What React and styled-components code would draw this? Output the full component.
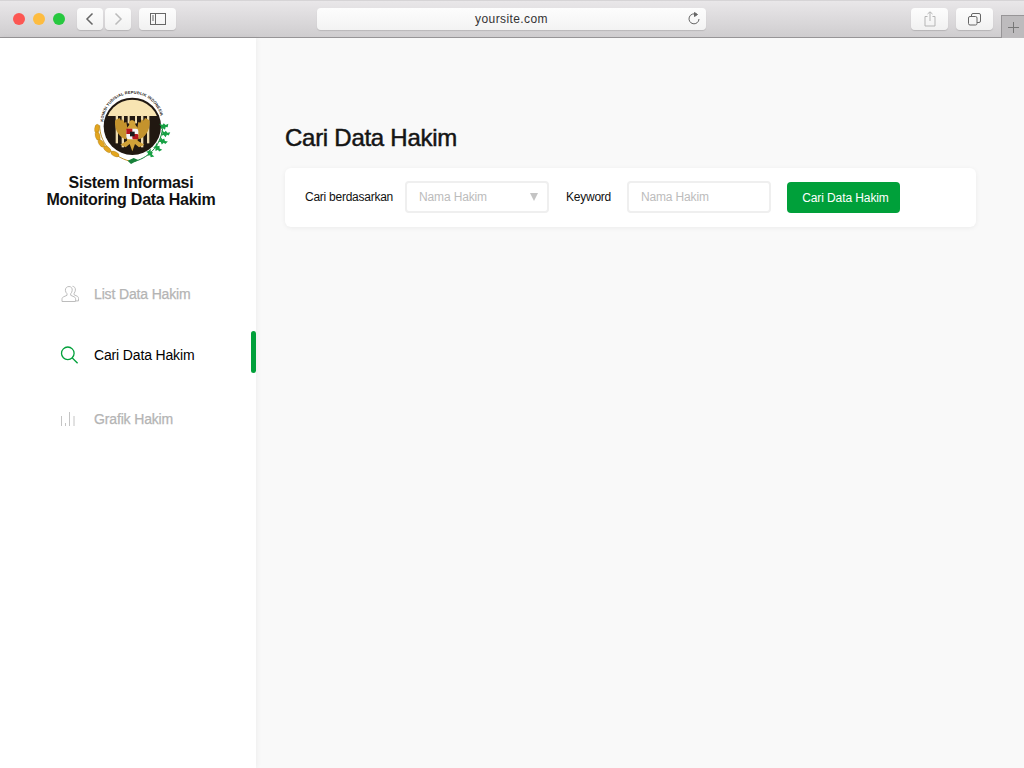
import React from 'react';
import styled, { createGlobalStyle } from 'styled-components';

const GlobalStyle = createGlobalStyle`
  html, body {
    margin: 0;
    padding: 0;
    height: 100%;
    overflow: hidden;
    font-family: "Liberation Sans", Arial, sans-serif;
  }
  * {
    box-sizing: border-box;
  }
`;

const Page = styled.div`
  width: 1024px;
  height: 768px;
  display: flex;
  flex-direction: column;
  background-color: #f9f9f9;
`;

const BrowserBar = styled.header`
  height: 38px;
  flex: none;
  display: flex;
  padding: 7px 0 0 13px;
  background: linear-gradient(#e9e7e9, #cfcdcf);
  border-top: 1px solid #d6d4d6;
  border-bottom: 1px solid #979597;
`;

const Lights = styled.div`
  display: flex;
  gap: 8px;
  padding-top: 5px;
  margin-right: 12px;
`;

const Light = styled.span`
  width: 12px;
  height: 12px;
  border-radius: 50%;
  background-color: ${(p) => p.$color};
`;

const BarButton = styled.button`
  width: ${(p) => p.$width}px;
  height: 22px;
  margin-right: ${(p) => p.$gap || 0}px;
  padding: 0;
  display: flex;
  align-items: center;
  justify-content: center;
  border: 0;
  border-radius: 4px;
  background: linear-gradient(#fdfdfd, #f1f1f1);
  box-shadow: 0 1px 1px rgba(0, 0, 0, 0.14);
`;

const AddressBar = styled.div`
  width: 389px;
  height: 22px;
  margin: 0 205px 0 141px;
  padding: 0 5px 0 0;
  display: flex;
  align-items: center;
  border-radius: 4px;
  background: linear-gradient(#fdfdfd, #f3f3f3);
  box-shadow: 0 1px 1px rgba(0, 0, 0, 0.12);
`;

const AddressText = styled.span`
  flex: 1;
  padding-left: 19px;
  text-align: center;
  font-size: 12px;
  letter-spacing: 0.4px;
  color: #333;
`;

const NewTab = styled.div`
  width: 23px;
  height: 23px;
  margin: 7px 0 0 8px;
  display: flex;
  align-items: center;
  justify-content: center;
  background-color: #bdbbbd;
  border: 1px solid #979597;
  border-width: 1px 0 0 1px;
`;

const Body = styled.div`
  flex: 1;
  display: flex;
  min-height: 0;
`;

const Sidebar = styled.aside`
  width: 256px;
  flex: none;
  background-color: #fff;
  box-shadow: 1px 0 5px rgba(0, 0, 0, 0.05);
  padding-top: 48px;
`;

const Brand = styled.div`
  width: 262px;
  display: flex;
  flex-direction: column;
  align-items: center;
`;

const BrandName = styled.h1`
  margin: 3px 0 0;
  font-size: 16px;
  line-height: 17px;
  font-weight: 700;
  text-align: center;
  letter-spacing: -0.25px;
  color: #111;
`;

const Nav = styled.nav`
  margin-top: 65px;
  display: flex;
  flex-direction: column;
`;

const NavItem = styled.a`
  position: relative;
  height: 42px;
  margin-bottom: ${(p) => p.$gap}px;
  padding-left: 60px;
  display: flex;
  align-items: center;
  font-size: 14px;
  letter-spacing: -0.15px;
  -webkit-text-stroke: ${(p) => (p.$active ? '0' : '0.25px')};
  color: ${(p) => (p.$active ? '#000' : '#b4b4b4')};
`;

const NavIcon = styled.span`
  width: 34px;
  flex: none;
  display: flex;
  padding-left: ${(p) => p.$nudge || 0}px;
`;

const ActiveMark = styled.span`
  position: absolute;
  top: -3px;
  right: 0;
  width: 5px;
  height: 42px;
  border-radius: 3px;
  background-color: #00a03a;
`;

const Main = styled.main`
  flex: 1;
  padding: 85px 48px 0 29px;
`;

const Title = styled.h2`
  margin: 0 0 15px;
  font-size: 24px;
  line-height: 30px;
  font-weight: 400;
  letter-spacing: -0.27px;
  -webkit-text-stroke: 0.5px #151515;
  color: #151515;
`;

const SearchCard = styled.section`
  height: 59px;
  padding: 0 20px;
  display: flex;
  align-items: center;
  border-radius: 6px;
  background-color: #fff;
  box-shadow: 0 1px 5px rgba(0, 0, 0, 0.06);
`;

const Label = styled.label`
  margin: 0 ${(p) => p.$gap}px 1px 0;
  font-size: 12px;
  letter-spacing: -0.25px;
  color: #111;
`;

const Field = styled.div`
  width: 144px;
  height: 32px;
  margin: 0 ${(p) => p.$gap}px 1px 0;
  padding: 0 9px 0 12px;
  display: flex;
  align-items: center;
  justify-content: space-between;
  border: 2px solid #efefef;
  border-radius: 4px;
  font-size: 12px;
  letter-spacing: -0.15px;
  color: #bcbcbc;
`;

const Caret = styled.span`
  width: 0;
  height: 0;
  border-left: 4px solid transparent;
  border-right: 4px solid transparent;
  border-top: 8px solid #c4c4c4;
`;

const KeywordInput = styled.input`
  width: 144px;
  height: 32px;
  margin: 0 16px 1px 0;
  padding: 0 12px;
  border: 2px solid #efefef;
  border-radius: 4px;
  outline: none;
  font-family: inherit;
  font-size: 12px;
  letter-spacing: -0.15px;
  &::placeholder {
    color: #bcbcbc;
    opacity: 1;
  }
`;

const SubmitButton = styled.button`
  width: 113px;
  height: 31px;
  padding: 0 0 0 4px;
  border: 0;
  border-radius: 4px;
  background-color: #00a03a;
  font-family: inherit;
  font-size: 12px;
  letter-spacing: -0.1px;
  color: #fff;
`;

const grains = [
  [36, 128, 6],
  [38, 150, -14],
  [49, 172, -34],
  [67, 190, -50],
  [90, 204, -64],
];

const leaves = [
  [236, 122, 0],
  [240, 144, 14],
  [232, 166, 34],
  [216, 186, 50],
  [194, 202, 66],
];

const Logo = () => (
  <svg width="96" height="85" viewBox="-6 0 288 255">
    <defs>
      <path id="logo-arc" d="M 55 110 A 87 87 0 0 1 229 110" />
      <clipPath id="logo-inner">
        <circle cx="142" cy="121" r="80" />
      </clipPath>
    </defs>
    <text fontFamily="Liberation Sans, sans-serif" fontSize="12" fontWeight="700" letterSpacing="0.4" fill="#1c1712">
      <textPath href="#logo-arc" startOffset="1%">KOMISI YUDISIAL REPUBLIK INDONESIA</textPath>
    </text>
    <circle cx="142" cy="121" r="86" fill="#211811" />
    <g clipPath="url(#logo-inner)">
      <rect x="60" y="40" width="164" height="50" fill="#f8e4b2" />
      <g fill="#efdcae">
        <rect x="92" y="88" width="7" height="84" />
        <rect x="110" y="88" width="7" height="96" />
        <rect x="128" y="88" width="6" height="24" />
        <rect x="150" y="88" width="6" height="24" />
        <rect x="168" y="88" width="7" height="96" />
        <rect x="186" y="88" width="7" height="84" />
      </g>
    </g>
    <path d="M90 104 C 94 100 100 98 104 96 L 108 104 L 114 100 L 118 110 L 124 108 L 128 132 L 124 160 C 106 156 88 136 90 104 Z" fill="#c4932d" />
    <path d="M194 104 C 190 100 184 98 180 96 L 176 104 L 170 100 L 166 110 L 160 108 L 156 132 L 160 160 C 178 156 196 136 194 104 Z" fill="#c4932d" />
    <path d="M133 116 C 129 110 133 103 141 103 C 149 103 153 110 151 116 L 160 128 L 158 164 L 178 176 L 162 184 L 150 174 L 142 196 L 134 174 L 122 184 L 106 176 L 126 164 L 124 128 Z" fill="#d2a238" />
    <rect x="124" y="128" width="36" height="32" rx="7" fill="#f5f5f5" />
    <rect x="124" y="128" width="18" height="16" fill="#b5161c" />
    <rect x="142" y="144" width="18" height="16" rx="4" fill="#b5161c" />
    <rect x="135" y="137" width="14" height="14" fill="#1b1b1b" />
    <path d="M44 118 C 44 165 76 210 136 226" fill="none" stroke="#c2932a" strokeWidth="3" />
    {grains.map(([x, y, r]) => (
      <ellipse key={x} cx={x} cy={y} rx="7" ry="13" transform={`rotate(${r} ${x} ${y})`} fill="#e3a51e" stroke="#9c7415" />
    ))}
    <path d="M150 226 C 196 212 230 176 234 116" fill="none" stroke="#14803a" strokeWidth="3" />
    {leaves.map(([x, y, r]) => (
      <path
        key={x + y}
        d="M-13 -9 L-3 -5 L0 -10 L6 -5 L14 -9 L12 2 L6 1 L4 9 L-3 4 L-9 8 L-8 0 Z"
        transform={`translate(${x} ${y}) rotate(${r})`}
        fill="#17a144"
      />
    ))}
    <path d="M128 224 L146 216 L160 222 L138 234 Z" fill="#17813a" />
  </svg>
);

const UsersIcon = () => (
  <svg width="19" height="18" viewBox="0 0 19 18" fill="none" stroke="#bdbdbd" strokeWidth="1">
    <path d="M8 1.500c2.200 0 3.400 1.700 3.200 3.800-.1 1.400-.7 2.600-1.500 3.400v1.600l3.600 1.600c1 .5 1.300 1.300 1.300 2.300v2.300H1v-2.300c0-1 .4-1.800 1.400-2.300L6 10.300V8.700c-.9-.8-1.500-2-1.600-3.400C4.200 3.200 5.800 1.500 8 1.500Z" />
    <path d="M11.500 1.300c1.900.1 3.100 1.700 2.900 3.800-.1 1.300-.6 2.400-1.300 3.200v1.500l3.100 1.400c1 .5 1.300 1.300 1.300 2.300v2.400h-2.500" />
  </svg>
);

const SearchIcon = () => (
  <svg width="19" height="18" viewBox="0 0 19 18" fill="none" stroke="#00a03a" strokeWidth="1.300">
    <circle cx="7.800" cy="7.300" r="6.300" />
    <path d="M12.300 12l5.300 5.300" />
  </svg>
);

const BarsIcon = () => (
  <svg width="16" height="16" viewBox="0 0 16 16" fill="none" stroke="#c4c4c4" strokeWidth="1">
    <path d="M1.500 5v10M5.500 12v3M9.500 1v14M14 5v10" />
  </svg>
);

const BrowserBarView = () => (
  <BrowserBar>
    <Lights>
      <Light $color="#fc5753" />
      <Light $color="#fdbc40" />
      <Light $color="#27c83f" />
    </Lights>
    <BarButton $width={26} $gap={2}>
      <svg width="10" height="14" viewBox="0 0 10 14" fill="none" stroke="#666" strokeWidth="1.500">
        <path d="M7.500 1.500L2 7l5.500 5.500" />
      </svg>
    </BarButton>
    <BarButton $width={26} $gap={8}>
      <svg width="10" height="14" viewBox="0 0 10 14" fill="none" stroke="#bbb" strokeWidth="1.500">
        <path d="M2.500 1.500L8 7l-5.500 5.500" />
      </svg>
    </BarButton>
    <BarButton $width={37}>
      <svg width="16" height="12" viewBox="0 0 16 12" fill="none" stroke="#666" strokeWidth="1">
        <rect x="0.500" y="0.500" width="15" height="11" />
        <path d="M5.500 0.500v11M2 3h2M2 5h2M2 7h2" />
      </svg>
    </BarButton>
    <AddressBar>
      <AddressText>yoursite.com</AddressText>
      <svg width="14" height="14" viewBox="0 0 14 14" fill="none" stroke="#666" strokeWidth="1">
        <path d="M9.500 2.500A5 5 0 1 0 12 7" />
        <path d="M7.500 0.500l3 2-3 2Z" fill="#666" />
      </svg>
    </AddressBar>
    <BarButton $width={37} $gap={8}>
      <svg width="12" height="16" viewBox="0 0 12 16" fill="none" stroke="#b5b5b5" strokeWidth="1">
        <path d="M3.500 5.500H1v9.500h10V5.500H8.500M6 10V1M3.500 3L6 .8 8.500 3" />
      </svg>
    </BarButton>
    <BarButton $width={37}>
      <svg width="13" height="13" viewBox="0 0 13 13" fill="none" stroke="#666" strokeWidth="1">
        <rect x="0.500" y="3.500" width="8.500" height="8.500" rx="1.500" />
        <path d="M3.500 3.500V2a1.500 1.500 0 0 1 1.500-1.500h6A1.500 1.500 0 0 1 12.500 2v6a1.500 1.500 0 0 1-1.500 1.500H9" />
      </svg>
    </BarButton>
    <NewTab>
      <svg width="11" height="11" viewBox="0 0 11 11" stroke="#777" strokeWidth="1">
        <path d="M5.500 0v11M0 5.500h11" />
      </svg>
    </NewTab>
  </BrowserBar>
);

export default function App() {
  return (
    <Page>
      <GlobalStyle />
      <BrowserBarView />
      <Body>
        <Sidebar>
          <Brand>
            <Logo />
            <BrandName>
              Sistem Informasi
              <br />
              Monitoring Data Hakim
            </BrandName>
          </Brand>
          <Nav>
            <NavItem $gap={19}>
              <NavIcon $nudge={1}><UsersIcon /></NavIcon>
              List Data Hakim
            </NavItem>
            <NavItem $active $gap={22}>
              <NavIcon><SearchIcon /></NavIcon>
              Cari Data Hakim
              <ActiveMark />
            </NavItem>
            <NavItem $gap={0}>
              <NavIcon><BarsIcon /></NavIcon>
              Grafik Hakim
            </NavItem>
          </Nav>
        </Sidebar>
        <Main>
          <Title>Cari Data Hakim</Title>
          <SearchCard>
            <Label $gap={12}>Cari berdasarkan</Label>
            <Field $gap={17}>
              Nama Hakim
              <Caret />
            </Field>
            <Label $gap={16}>Keyword</Label>
            <KeywordInput placeholder="Nama Hakim" />
            <SubmitButton>Cari Data Hakim</SubmitButton>
          </SearchCard>
        </Main>
      </Body>
    </Page>
  );
}
